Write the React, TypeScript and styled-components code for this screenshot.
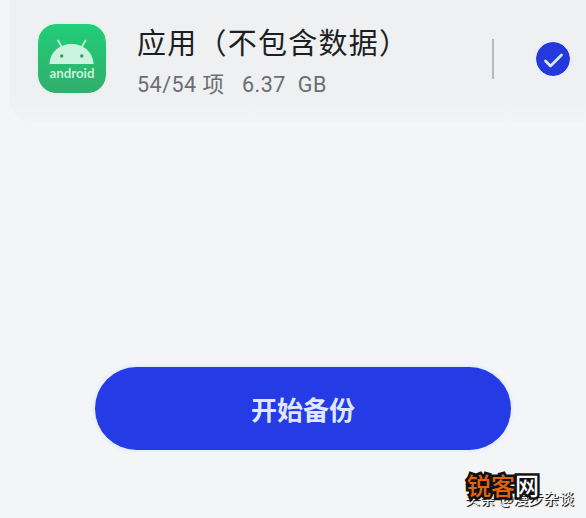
import React from "react";
import styled, { createGlobalStyle } from "styled-components";

const GlobalStyle = createGlobalStyle`
  * { box-sizing: border-box; }
  body { margin: 0; background: #f3f5f7; }
`;

const Screen = styled.main`
  position: relative;
  display: flex;
  flex-direction: column;
  align-items: center;
  width: 586px;
  height: 518px;
  overflow: hidden;
  background: #f3f5f7;
  font-family: "Roboto", "Noto Sans CJK SC", sans-serif;
`;

const Card = styled.section`
  display: flex;
  align-self: stretch;
  height: 121px;
  margin-left: 10px;
  padding: 24px 15px 0 28px;
  border-radius: 0 0 0 20px;
  background: linear-gradient(#eff0f2 0 80%, #f2f3f5);
`;

const AppIcon = styled.svg`
  flex: none;
  width: 68px;
  height: 69px;
  border-radius: 18px;
  box-shadow: 0 0 3px 1px #d6f8e6;
`;

const Info = styled.div`
  display: flex;
  flex-direction: column;
  flex: 1;
  margin-left: 31px;
  white-space: nowrap;
`;

const Title = styled.h1`
  height: 42px;
  margin: -2px 0 0;
  color: #1d1e22;
  font: 400 29px/38px "Noto Sans CJK SC", sans-serif;
  letter-spacing: 1.25px;
`;

const Meta = styled.p`
  display: flex;
  margin: 0;
  color: #6b6d71;
  font-size: 21.5px;
  line-height: 42px;
  letter-spacing: 0.5px;
`;

const Count = styled.span`
  width: 105px;
`;

const Size = styled.span`
  word-spacing: 6px;
`;

const Divider = styled.span`
  width: 2px;
  height: 40px;
  margin: 15px 42px 0 0;
  background: #b9babd;
`;

const Check = styled.svg`
  flex: none;
  width: 34px;
  height: 34px;
  margin: 18px 1px 0 0;
  border-radius: 50%;
  box-shadow: 0 0 3px 2px #e5edfc;
`;

const StartButton = styled.button`
  width: 416px;
  height: 83px;
  margin: 246px 0 0 20px;
  padding: 0;
  border: 0;
  border-radius: 42px;
  background: #243be5;
  box-shadow: 0 0 3px 2px #e4edfc;
  color: #dfe8ff;
  font: 700 26px/36px "Noto Sans CJK SC", sans-serif;
`;

const Author = styled.span`
  position: absolute;
  left: 465px;
  top: 486px;
  color: #fff;
  font: 400 15.2px/22px "Noto Sans CJK SC", sans-serif;
  white-space: nowrap;
  text-shadow: 1px 1px 1px #222, 1px 1px 0 #333;
`;

const SiteMark = styled.span`
  position: absolute;
  left: 467px;
  top: 468px;
  color: #fff;
  font: 500 24px/34px "Noto Sans CJK SC", sans-serif;
  white-space: nowrap;
  -webkit-text-stroke: 5px #111;
  paint-order: stroke fill;
`;

const Accent = styled.span`
  color: #e0640f;
`;

function AndroidIcon() {
  return (
    <AppIcon viewBox="0 0 68 69" role="img" aria-label="android">
      <defs>
        <linearGradient id="tile" x1="0" y1="0" x2="0" y2="1">
          <stop offset="0" stopColor="#21ce79" />
          <stop offset="1" stopColor="#32ad6b" />
        </linearGradient>
      </defs>
      <rect width="68" height="69" rx="18" fill="url(#tile)" />
      <path d="M20 16.500l4 7M47.500 16.500l-4 7" stroke="#bdf3d4" strokeWidth="1.800" strokeLinecap="round" />
      <path d="M11.500 40C12 28 21.500 20 33.500 20S55 28 55.500 40Z" fill="#c9f3dc" />
      <circle cx="23.700" cy="32" r="1.700" fill="#3c9869" />
      <circle cx="43.800" cy="32" r="1.700" fill="#3c9869" />
      <text
        x="34" y="53.500" textAnchor="middle" textLength="45" lengthAdjust="spacingAndGlyphs"
        fontFamily="Lato, sans-serif" fontSize="12.500" fontWeight="700" fill="#c5f4d9"
      >android</text>
    </AppIcon>
  );
}

export default function App() {
  return (
    <>
      <GlobalStyle />
      <Screen>
        <Card>
          <AndroidIcon />
          <Info>
            <Title>应用（不包含数据）</Title>
            <Meta>
              <Count>54/54 项</Count>
              <Size>6.37 GB</Size>
            </Meta>
          </Info>
          <Divider />
          <Check viewBox="0 0 34 34" aria-label="已选择">
            <circle cx="17" cy="17" r="17" fill="#2438dc" />
            <path d="M9.500 19l5 5L25.500 13" fill="none" stroke="#dae5ff" strokeWidth="2.800" strokeLinecap="round" strokeLinejoin="round" />
          </Check>
        </Card>
        <StartButton type="button">开始备份</StartButton>
        <Author>头条 @漫步杂谈</Author>
        <SiteMark><Accent>锐客</Accent>网</SiteMark>
      </Screen>
    </>
  );
}
